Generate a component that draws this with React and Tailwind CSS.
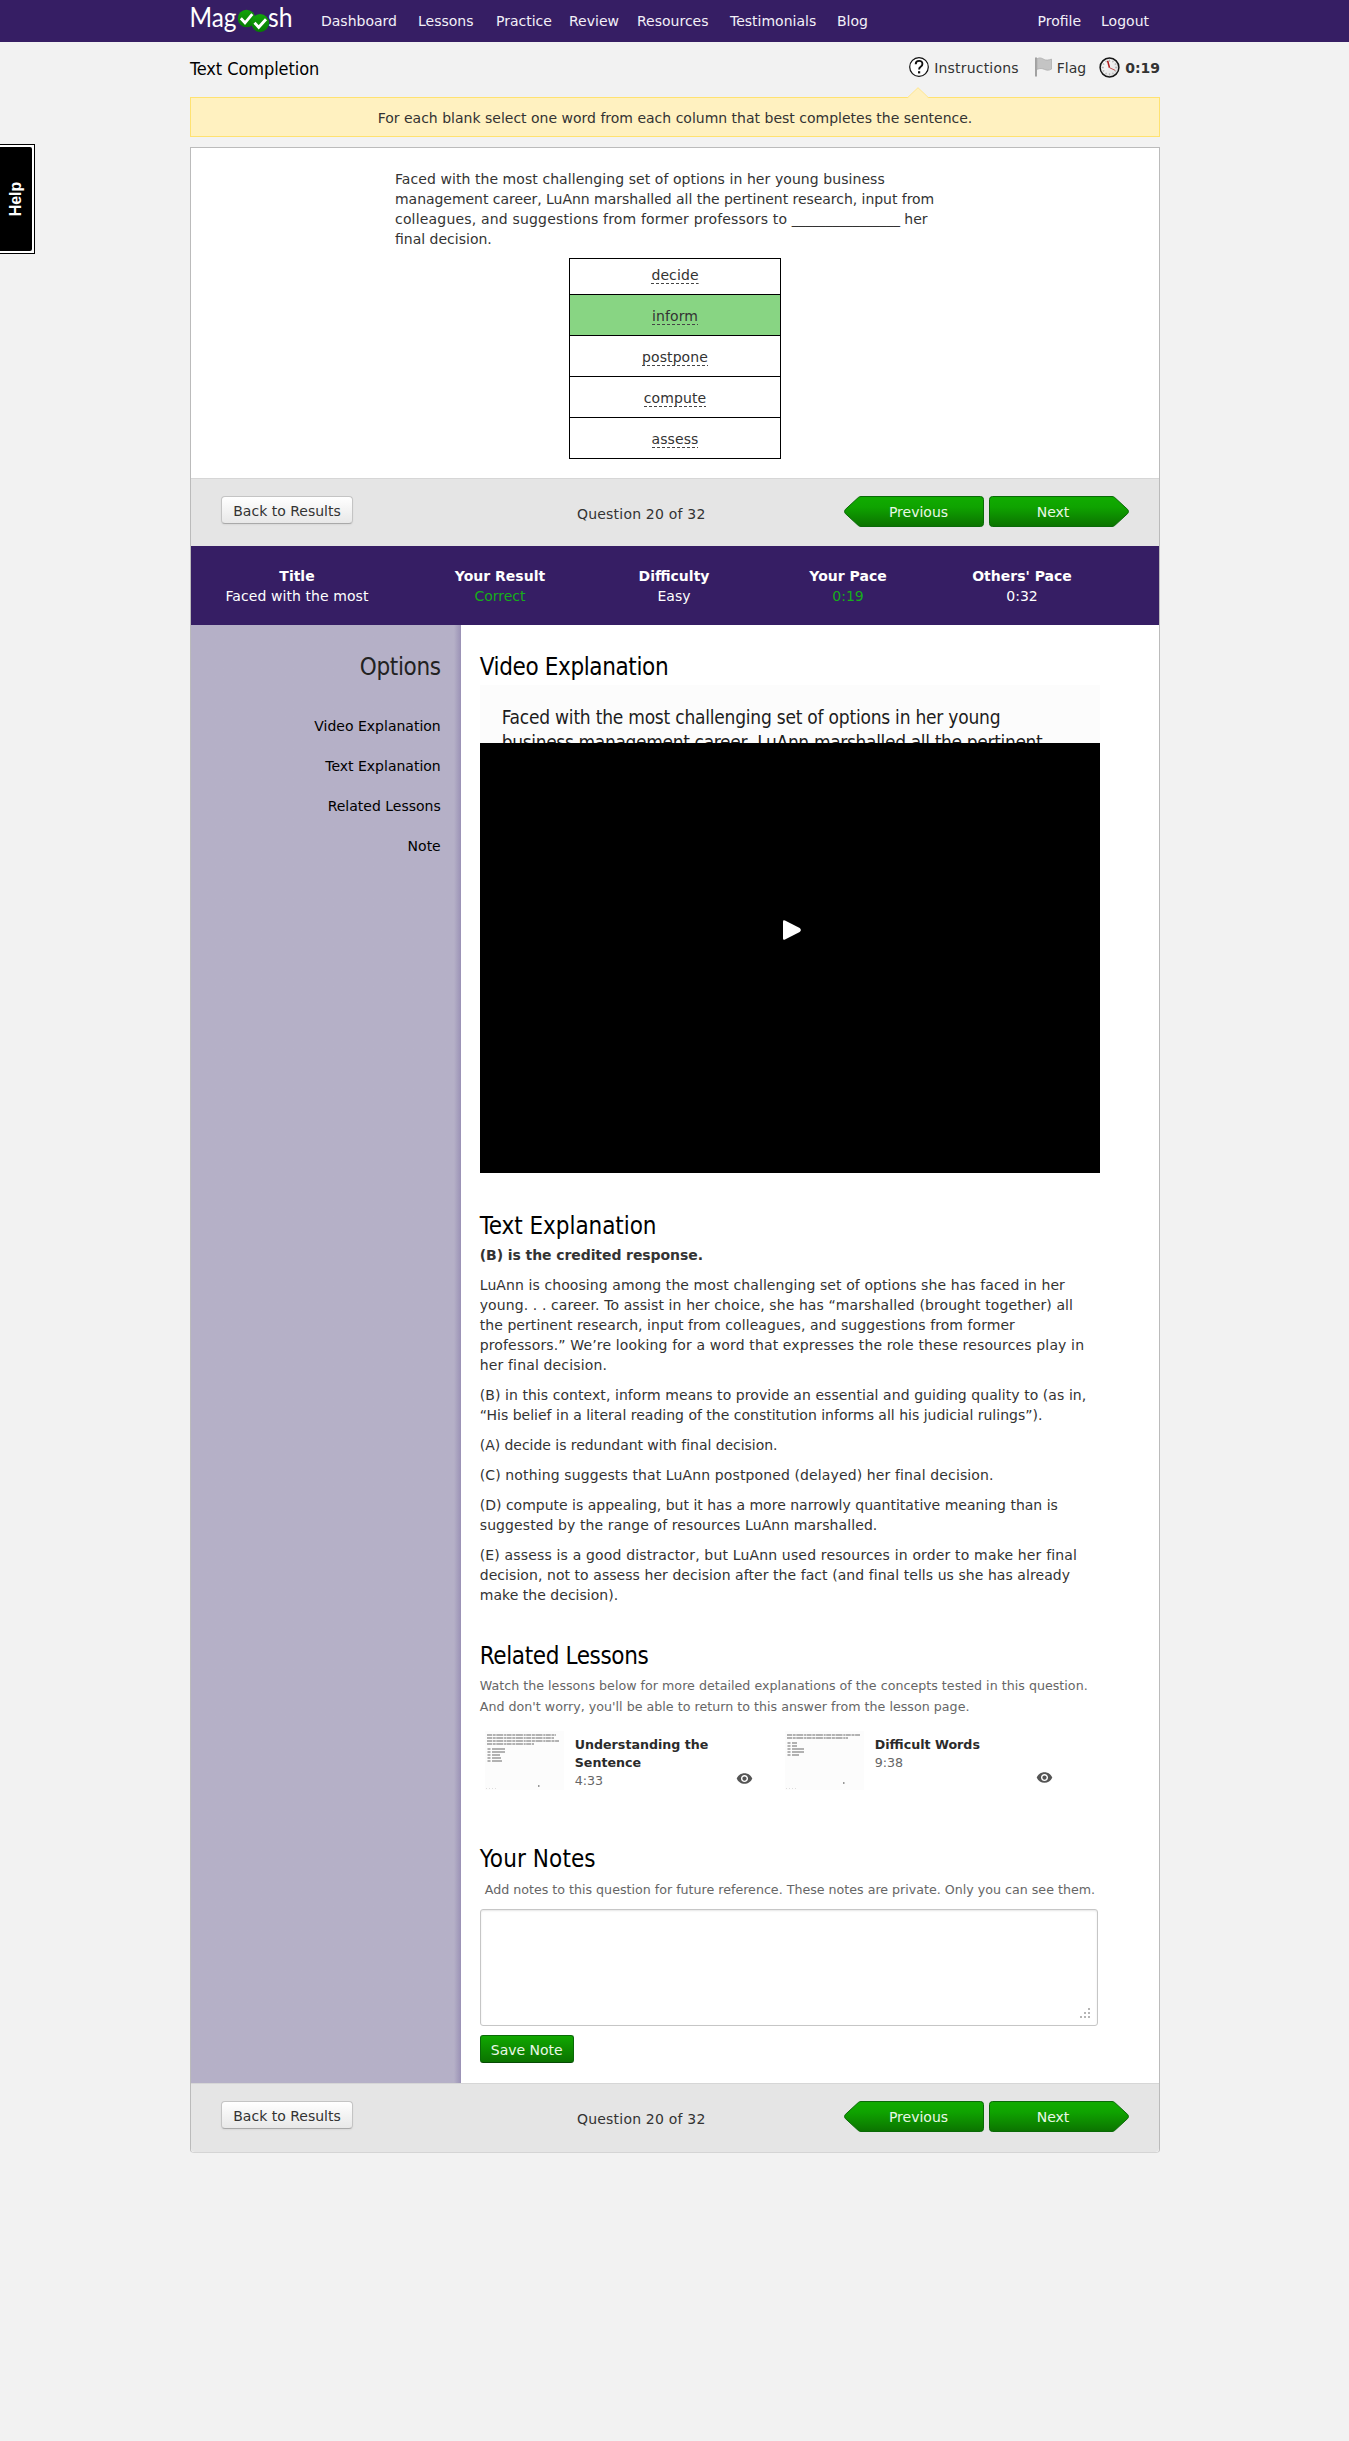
import React from "react";
import { MdVisibility } from "react-icons/md";

const COND = "font-['DejaVu_Sans_Condensed','DejaVu_Sans',sans-serif]";

function Logo() {
  return (
    <svg width="104" height="36" viewBox="-1 0 104 36" className="block">
      <defs>
        <linearGradient id="ball" x1="0" y1="0" x2="0" y2="1">
          <stop offset="0" stopColor="#12a30a" />
          <stop offset="1" stopColor="#067c02" />
        </linearGradient>
      </defs>
      <text x="-1.5" y="27" textLength="47" lengthAdjust="spacingAndGlyphs" fontFamily="Lato, sans-serif" fontSize="26" fill="#fff">Mag</text>
      <text x="77" y="27" textLength="24.5" lengthAdjust="spacingAndGlyphs" fontFamily="Lato, sans-serif" fontSize="26" fill="#fff">sh</text>
      <circle cx="55.5" cy="18.5" r="8.7" fill="url(#ball)" />
      <circle cx="69.2" cy="23" r="8.9" fill="url(#ball)" />
      <path d="M49.8 18.2l4.2 4.6 7.3-8.6" fill="none" stroke="#fff" strokeWidth="2.8" />
      <path d="M63.5 22.7l4.2 4.6 7.3-8.1" fill="none" stroke="#fff" strokeWidth="2.8" />
    </svg>
  );
}

const LINKS = [
  ["Dashboard", "w-[97px]"],
  ["Lessons", "w-[78px]"],
  ["Practice", "w-[73px]"],
  ["Review", "w-[68px]"],
  ["Resources", "w-[93px]"],
  ["Testimonials", "w-[107px]"],
  ["Blog", "w-[40px]"],
];

function Nav() {
  return (
    <nav className="h-[42px] bg-[#361e64] text-[#f3f0f8]">
      <div className="ml-[190px] flex h-full w-[970px] items-center pr-[11px] leading-5">
        <div className="h-[42px] w-[131px]">
          <Logo />
        </div>
        <div className="flex">
          {LINKS.map(([t, w]) => (
            <a key={t} className={w}>{t}</a>
          ))}
        </div>
        <div className="ml-auto flex gap-[20px]">
          <a>Profile</a>
          <a>Logout</a>
        </div>
      </div>
    </nav>
  );
}

function ClockIcon() {
  return (
    <svg width="21" height="21" viewBox="0 0 21 21">
      <defs>
        <linearGradient id="face" x1="0" y1="0" x2="1" y2="1">
          <stop offset="0" stopColor="#fff" />
          <stop offset="1" stopColor="#ddd" />
        </linearGradient>
      </defs>
      <circle cx="10.5" cy="10.5" r="9.4" fill="url(#face)" stroke="#161616" strokeWidth="1.5" />
      <g stroke="#b5b5b5" strokeWidth="1.3">
        <path d="M10.5 2.6v2.2M10.5 16.2v2.2M2.6 10.5h2.2M16.2 10.5h2.2M6.6 3.7l.9 1.6M14.4 3.7l-.9 1.6M3.7 6.6l1.6.9M17.3 6.6l-1.6.9M3.7 14.4l1.6-.9M17.3 14.4l-1.6-.9M6.6 17.3l.9-1.6M14.4 17.3l-.9-1.6" />
      </g>
      <path d="M8.6 3.8l1.9 6.9" stroke="#b01818" strokeWidth="1.5" />
      <path d="M10.5 10.7l5.6 2.6" stroke="#c05050" strokeWidth="1" />
    </svg>
  );
}

function FlagIcon() {
  return (
    <svg width="17" height="20" viewBox="0 0 17 20">
      <path d="M1 0.5v19" stroke="#8d8d8d" strokeWidth="1.6" />
      <path d="M2.2 1.6c3-1.6 5.2 0 7 .9s4.5 .8 7.3-.4v10c-2.8 1.6-5 1.2-7 .3s-4.5-1.4-7.3-.1z" fill="#c4c4c4" stroke="#adadad" strokeWidth="0.8" />
    </svg>
  );
}

function TitleRow() {
  return (
    <div className="flex h-[55px] items-start leading-5">
      <h1 className={`pt-[15px] text-[18px] leading-6 tracking-[-0.07px] text-black ${COND}`}>Text Completion</h1>
      <div className="ml-auto flex pt-[15px] text-[#333]">
        <span className="flex items-start">
          <svg width="20" height="20" viewBox="0 0 20 20">
            <circle cx="10" cy="10" r="9.3" fill="#fff" stroke="#111" strokeWidth="1.2" />
            <path d="M6.7 7.2q.1-3.300 3.400-3.300t3.300 3q0 1.700-1.700 2.800t-1.600 2.800" fill="none" stroke="#111" strokeWidth="1.9" />
            <path d="M9 14.200h2.200v2.200H9z" fill="#111" />
          </svg>
          <span className="ml-[5px] pt-px tracking-[0.2px]">Instructions</span>
        </span>
        <span className="ml-[16px] flex items-start">
          <FlagIcon />
          <span className="ml-[5px] pt-px">Flag</span>
        </span>
        <span className="ml-[13px] flex items-start">
          <ClockIcon />
          <b className="ml-[5px] pt-px">0:19</b>
        </span>
      </div>
    </div>
  );
}

function ArrowButton({ dir }) {
  const prev = dir === "prev";
  const id = "green-" + dir;
  return (
    <button className="grid h-[31px] w-[140px] place-items-center">
      <svg width="140" height="31" viewBox="0 0 140 31" className="col-start-1 row-start-1">
        <defs>
          <linearGradient id={id} x1="0" y1="0" x2="0" y2="1">
            <stop offset="0.1" stopColor="#10aa00" />
            <stop offset="0.35" stopColor="#0fa300" />
            <stop offset="1" stopColor="#0b7300" />
          </linearGradient>
        </defs>
        <path
          transform={prev ? undefined : "matrix(-1 0 0 1 140 0)"}
          d="M17 .5H136.500a3 3 0 0 1 3 3V27.500a3 3 0 0 1-3 3H17Q15.500 30.500 14.300 29.500L1.300 17.500Q-.300 15.500 1.300 13.500L14.300 1.500Q15.500 .5 17 .5z"
          fill={"url(#" + id + ")"}
          stroke="#0a6a08"
        />
      </svg>
      <span className={`col-start-1 row-start-1 text-[#e9f8e6] ${prev ? "pl-[9px]" : "pr-[12px]"}`}>{prev ? "Previous" : "Next"}</span>
    </button>
  );
}

function Toolbar({ last }) {
  return (
    <div className={`flex items-start border-t border-[#d6d6d6] bg-[#e5e5e5] leading-5 ${last ? "h-[69px] rounded-b-[4px]" : "h-[68px]"}`}>
      <button className="ml-[30px] mt-[17px] h-7 w-[132px] rounded-[4px] border border-[#c4c4c4] border-b-[#a9a9a9] bg-linear-to-b from-white to-[#e8e8e8] pt-[2px] text-[#333] shadow-[0_1px_2px_rgba(0,0,0,0.06)]">
        Back to Results
      </button>
      <span className="ml-[224px] mt-[25px] w-[130px] whitespace-nowrap tracking-[0.2px]">Question 20 of 32</span>
      <div className="ml-auto mr-[30px] mt-[17px] flex gap-[5px]">
        <ArrowButton dir="prev" />
        <ArrowButton dir="next" />
      </div>
    </div>
  );
}

const WORDS = ["decide", "inform", "postpone", "compute", "assess"];

function Question() {
  return (
    <div className="h-[330px] pt-[21px]">
      <p className="ml-[204px] whitespace-nowrap leading-5">
        <span className="tracking-[0.07px]">Faced with the most challenging set of options in her young business</span>
        <br />
        <span className="tracking-[-0.04px]">management career, LuAnn marshalled all the pertinent research, input from</span>
        <br />
        <span className="tracking-[0.18px]">colleagues, and suggestions from former professors to </span>
        <span className="tracking-[-0.25px]">________________</span> her
        <br />
        final decision.
      </p>
      <div className="mx-auto mt-[9px] w-[212px] border border-black">
        {WORDS.map((w, i) => (
          <div
            key={w}
            className={`flex justify-center leading-5 ${i === 0 ? "h-[35px] pt-[6px]" : "h-[41px] border-t border-black pt-[11px]"} ${i === 1 ? "bg-[#88d583]" : ""}`}
          >
            <span className="h-[19px] bg-[repeating-linear-gradient(90deg,#444_0_3px,transparent_3px_5px)] bg-[length:100%_1px] bg-bottom bg-no-repeat tracking-[0.1px]">{w}</span>
          </div>
        ))}
      </div>
    </div>
  );
}

function Stats() {
  const cols = [
    ["Your Result", "Correct", true],
    ["Difficulty", "Easy", false],
    ["Your Pace", "0:19", true],
    ["Others' Pace", "0:32", false],
  ];
  return (
    <div className="flex h-[79px] bg-[#361e64] pl-[10px] pt-5 text-center leading-5 text-white">
      <div className="mr-5 w-[192px]">
        <b className="block">Title</b>
        <span className="tracking-[0.08px]">Faced with the most</span>
      </div>
      {cols.map(([h, v, green]) => (
        <div key={h} className="w-[174px]">
          <b className="block">{h}</b>
          <span className={green ? "text-[#17ad1a]" : ""}>{v}</span>
        </div>
      ))}
    </div>
  );
}

function Heading({ children, spacing = "tracking-[-0.38px]" }) {
  return <h2 className={`whitespace-nowrap text-[24px] leading-7 text-black ${spacing} ${COND}`}>{children}</h2>;
}

const PARAS = [
  [
    ["LuAnn is choosing among the most challenging set of options she has faced in her", "tracking-[0.09px]"],
    ["young. . . career. To assist in her choice, she has “marshalled (brought together) all", "tracking-[0.1px]"],
    ["the pertinent research, input from colleagues, and suggestions from former", "tracking-[0.065px]"],
    ["professors.” We’re looking for a word that expresses the role these resources play in", "tracking-[0.14px]"],
    ["her final decision.", "tracking-[0.15px]"],
  ],
  [
    ["(B) in this context, inform means to provide an essential and guiding quality to (as in,", "tracking-[0.065px]"],
    ["“His belief in a literal reading of the constitution informs all his judicial rulings”).", "tracking-[0px]"],
  ],
  [["(A) decide is redundant with final decision.", "tracking-[-0.04px]"]],
  [["(C) nothing suggests that LuAnn postponed (delayed) her final decision.", "tracking-[0.12px]"]],
  [
    ["(D) compute is appealing, but it has a more narrowly quantitative meaning than is", "tracking-[0px]"],
    ["suggested by the range of resources LuAnn marshalled.", "tracking-[0.1px]"],
  ],
  [
    ["(E) assess is a good distractor, but LuAnn used resources in order to make her final", "tracking-[0.16px]"],
    ["decision, not to assess her decision after the fact (and final tells us she has already", "tracking-[0.06px]"],
    ["make the decision).", "tracking-[0.03px]"],
  ],
];

function Thumb({ lines, items, dot }) {
  return (
    <svg width="79" height="59" viewBox="0 0 79 59" className="bg-[#fcfcfc]">
      {lines.map((w, i) => (
        <path key={i} d={`M2 ${4 + i * 3}h${w}`} stroke="#999" strokeWidth="1.4" strokeDasharray="5 .7 3 .6 7 .8 2 .5" />
      ))}
      {items.map((w, i) => (
        <g key={i} stroke="#999" strokeWidth="1.4">
          <path d={`M2.5 ${lines.length * 3 + 6 + i * 3}h3M7 ${lines.length * 3 + 6 + i * 3}h${w}`} />
        </g>
      ))}
      <path d={dot} stroke="#777" strokeWidth="1.5" />
      <path d="M1 57.500h11" stroke="#ddd" strokeDasharray="1 2" />
    </svg>
  );
}

function Lesson({ title, time, thumb, eye }) {
  return (
    <div className="flex h-[59px] w-[300px] items-start">
      {thumb}
      <div className="ml-[11px] w-[161px] pt-[5px] text-[12.65px] leading-[18px]">
        <b className="block whitespace-nowrap text-[#2b2b2b]">{title}</b>
        <span className="block text-[#666]">{time}</span>
      </div>
      <MdVisibility className={`h-[17px] w-[17px] text-[#555] ${eye}`} />
    </div>
  );
}

function Content() {
  return (
    <div className="w-[699px] pl-[19px] pt-7">
      <Heading>Video Explanation</Heading>
      <div className="mt-1 h-[488px] w-[620px] bg-[#fcfcfc]">
        <div className={`h-[58px] overflow-hidden whitespace-nowrap pl-[22px] pt-[20px] text-[19px] leading-[25px] text-[#1c1c1c] ${COND}`}>
          <div className="tracking-[-0.23px]">Faced with the most challenging set of options in her young</div>
          <div className="tracking-[-0.35px]">business management career, LuAnn marshalled all the pertinent</div>
        </div>
        <div className="h-[430px] bg-black pl-[303px] pt-[177px]">
          <svg width="18" height="20" viewBox="0 0 18 20">
            <path d="M0 1.5Q0-.3 2 .5L16.7 8Q19 10 16.7 12L2 19.5Q0 20.3 0 18.5z" fill="#fff" />
          </svg>
        </div>
      </div>

      <div className="mt-[39px]">
        <Heading spacing="tracking-[-0.06px]">Text Explanation</Heading>
        <b className="mt-[5px] block leading-5 tracking-[-0.08px]">(B) is the credited response.</b>
        {PARAS.map((lines) => (
          <p key={lines[0][0]} className="mt-[10px] whitespace-nowrap leading-5">
            {lines.map(([l, spacing]) => (
              <span key={l} className={`block ${spacing}`}>{l}</span>
            ))}
          </p>
        ))}
      </div>

      <div className="mt-[37px]">
        <Heading>Related Lessons</Heading>
        <p className="mt-[5px] whitespace-nowrap text-[12.65px] leading-[21px] tracking-[0.02px] text-[#666]">
          Watch the lessons below for more detailed explanations of the concepts tested in this question.
          <br />
          And don't worry, you'll be able to return to this answer from the lesson page.
        </p>
        <div className="mt-[14px] flex pl-[5px]">
          <Lesson
            title={<>Understanding the<br />Sentence</>}
            time="4:33"
            eye="mt-[39px]"
            thumb={<Thumb lines={[69, 67, 72, 47]} items={[13, 13, 8, 9, 10]} dot="M53 55h1.5" />}
          />
          <Lesson
            title="Difficult Words"
            time="9:38"
            eye="mt-[38px]"
            thumb={<Thumb lines={[73, 61]} items={[5, 5, 12, 12, 7]} dot="M58 52h1.5" />}
          />
        </div>
      </div>

      <div className="mt-[55px]">
        <Heading spacing="tracking-[0.1px]">Your Notes</Heading>
        <p className="mt-[6px] whitespace-nowrap pl-[5px] text-[12.65px] leading-[21px] text-[#666]">
          Add notes to this question for future reference. These notes are private. Only you can see them.
        </p>
        <div className="mt-[9px] flex h-[117px] w-[618px] items-end justify-end rounded-[3px] border border-[#c6c6c6] bg-white p-[7px] shadow-[inset_0_1px_2px_rgba(0,0,0,0.1)]">
          <svg width="10" height="10" viewBox="0 0 10 10" fill="#b5b5b5">
            <path d="M8 0h2v2h-2zM8 4h2v2h-2zM8 8h2v2h-2zM4 4h2v2h-2zM4 8h2v2h-2zM0 8h2v2h-2z" />
          </svg>
        </div>
        <button className="mt-[9px] block h-7 w-[94px] rounded-[3px] border border-[#0a6a08] border-b-[#064a04] bg-linear-to-b from-[#10a800] to-[#0b7300] pt-px leading-5 text-[#e9f8e6]">
          Save Note
        </button>
      </div>
    </div>
  );
}

export default function App() {
  return (
    <div className="relative h-[2441px] bg-[#f2f2f2] font-['DejaVu_Sans',sans-serif] text-[14px] text-[#333]">
      <Nav />
      <div className="absolute left-0 top-[144px] h-[110px] w-[35px] border border-l-0 border-black bg-white py-[2px] pr-[2px]">
        <div className="flex h-full w-full items-center justify-center rounded-r-[2px] bg-black">
          <span className="-rotate-90 font-['Liberation_Sans',sans-serif] text-[16px] font-bold leading-4 text-white">Help</span>
        </div>
      </div>
      <main className="ml-[190px] w-[970px]">
        <TitleRow />
        <div className="relative flex h-10 items-center justify-center border border-[#ffe271] bg-[#fff1c0] pt-[2px]">
          For each blank select one word from each column that best completes the sentence.
          <svg width="22" height="12" viewBox="0 0 22 12" className="absolute -top-[11px] left-[716px]">
            <path d="M0 11.5L11 .7L22 11.5z" fill="#fff1c0" />
            <path d="M.5 10.7L11 .7L21.5 10.7" fill="none" stroke="#ffe68c" />
          </svg>
        </div>
        <div className="mt-[10px] rounded-b-[4px] border border-[#bbb] border-b-[#d4d4d4] bg-white">
          <Question />
          <Toolbar />
          <Stats />
          <div className="flex h-[1458px]">
            <aside className="w-[270px] bg-[#b5b0c7] bg-linear-to-l from-[#9a91b5] via-[#b5b0c7] via-[7px] to-[#b5b0c7] pr-5 pt-7 text-right text-black">
              <h2 className={`mb-[25px] text-[24px] leading-7 tracking-[-0.33px] text-[#222] ${COND}`}>Options</h2>
              {["Video Explanation", "Text Explanation", "Related Lessons", "Note"].map((t) => (
                <a key={t} className="block py-[10px] leading-5">{t}</a>
              ))}
            </aside>
            <Content />
          </div>
          <Toolbar last />
        </div>
      </main>
    </div>
  );
}
